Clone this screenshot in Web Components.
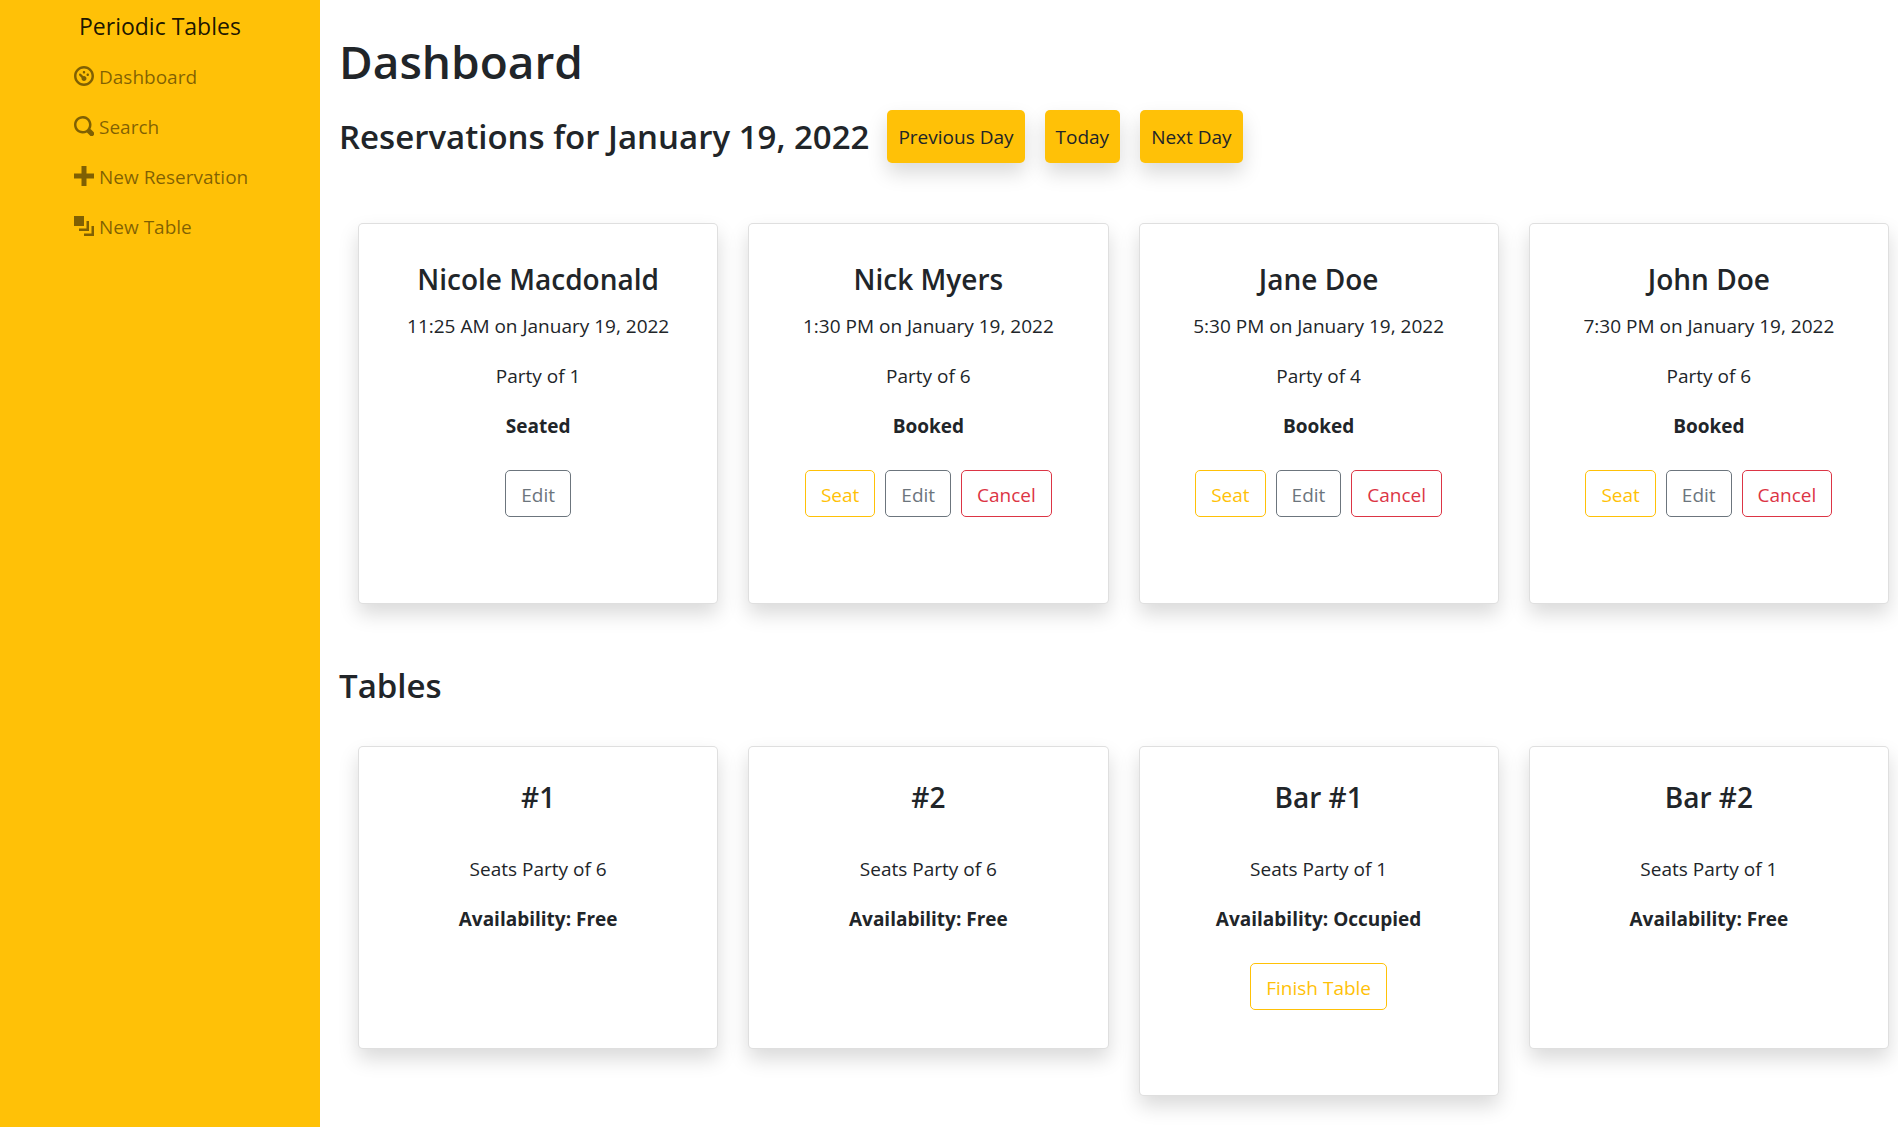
<!DOCTYPE html>
<html lang="en">
<head>
<meta charset="utf-8">
<title>Periodic Tables</title>
<style>
  body {
    margin: 0;
    background: #fff;
    color: #212529;
    font: 400 19px/30px "Open Sans", "Noto Sans", sans-serif;
  }
</style>
</head>
<body>
<app-shell>
  <side-nav slot="nav" brand="Periodic Tables">
    <nav-item icon="dashboard">Dashboard</nav-item>
    <nav-item icon="search">Search</nav-item>
    <nav-item icon="plus">New Reservation</nav-item>
    <nav-item icon="layers">New Table</nav-item>
  </side-nav>
  <day-header heading="Dashboard" subheading="Reservations for January 19, 2022">
    <app-button kind="solid">Previous Day</app-button>
    <app-button kind="solid">Today</app-button>
    <app-button kind="solid">Next Day</app-button>
  </day-header>
  <card-grid>
    <reservation-card name="Nicole Macdonald" time="11:25 AM on January 19, 2022" party="1" status="Seated">
      <app-button kind="secondary">Edit</app-button>
    </reservation-card>
    <reservation-card name="Nick Myers" time="1:30 PM on January 19, 2022" party="6" status="Booked">
      <app-button kind="warning">Seat</app-button>
      <app-button kind="secondary">Edit</app-button>
      <app-button kind="danger">Cancel</app-button>
    </reservation-card>
    <reservation-card name="Jane Doe" time="5:30 PM on January 19, 2022" party="4" status="Booked">
      <app-button kind="warning">Seat</app-button>
      <app-button kind="secondary">Edit</app-button>
      <app-button kind="danger">Cancel</app-button>
    </reservation-card>
    <reservation-card name="John Doe" time="7:30 PM on January 19, 2022" party="6" status="Booked">
      <app-button kind="warning">Seat</app-button>
      <app-button kind="secondary">Edit</app-button>
      <app-button kind="danger">Cancel</app-button>
    </reservation-card>
  </card-grid>
  <section-title>Tables</section-title>
  <card-grid>
    <table-card name="#1" seats="6" availability="Free"></table-card>
    <table-card name="#2" seats="6" availability="Free"></table-card>
    <table-card name="Bar #1" seats="1" availability="Occupied">
      <app-button kind="warning">Finish Table</app-button>
    </table-card>
    <table-card name="Bar #2" seats="1" availability="Free"></table-card>
  </card-grid>
</app-shell>

<script>
const SHADOW = '0 10px 20px rgba(0, 0, 0, .15)';

const ICONS = {
  dashboard: 'M4 0c-2.2 0-4 1.8-4 4s1.8 4 4 4 4-1.8 4-4-1.8-4-4-4zm0 1c1.66 0 3 1.34 3 3s-1.34 3-3 3-3-1.34-3-3 1.34-3 3-3zm0 1c-.28 0-.5.22-.5.5s.22.5.5.5.5-.22.5-.5-.22-.5-.5-.5zm-1.66 1a.5.5 0 0 0-.19.84l.91.91c-.02.08-.06.16-.06.25 0 .55.45 1 1 1s1-.45 1-1-.45-1-1-1c-.09 0-.17.04-.25.06l-.91-.91a.5.5 0 0 0-.44-.16.5.5 0 0 0-.06 0zm3.16 0c-.28 0-.5.22-.5.5s.22.5.5.5.5-.22.5-.5-.22-.5-.5-.5z',
  search: 'M3.5 0c-1.93 0-3.5 1.57-3.5 3.5s1.57 3.5 3.5 3.5c.59 0 1.17-.14 1.66-.41a1 1 0 0 0 .13.13l1 1a1.02 1.02 0 1 0 1.44-1.44l-1-1a1 1 0 0 0-.16-.13c.27-.49.44-1.06.44-1.66 0-1.93-1.55-3.5-3.5-3.5zm0 1c1.39 0 2.5 1.11 2.5 2.5 0 .66-.24 1.27-.66 1.72-.01.01-.02.02-.03.03a1 1 0 0 0-.13.13c-.44.4-1.04.63-1.69.63-1.39 0-2.5-1.11-2.5-2.5s1.11-2.5 2.5-2.5z',
  plus: 'M3 0v3h-3v2h3v3h2v-3h3v-2h-3v-3h-2z',
  layers: 'M0 0v4h4v-4h-4zm5 2v3h-3v1h4v-4h-1zm2 2v3h-3v1h4v-4h-1z'
};

/* Base class: renders css() and html() into an open shadow root. */
class View extends HTMLElement {
  connectedCallback() {
    if (this.shadowRoot) return;
    this.attachShadow({ mode: 'open' }).innerHTML =
      `<style>*{box-sizing:border-box}${this.css()}</style>${this.html()}`;
  }
  attr(name) { return this.getAttribute(name) || ''; }
}

customElements.define('app-shell', class extends View {
  css() { return `
    :host { display: flex; min-height: 100vh; }
    aside { flex: none; width: 320px; background: #ffc107; }
    main { flex: 1; min-width: 0; padding: 31px 9px 30px 19px; }
  `; }
  html() { return `<aside><slot name="nav"></slot></aside><main><slot></slot></main>`; }
});

customElements.define('side-nav', class extends View {
  css() { return `
    :host { display: block; }
    .brand { display: flex; align-items: center; height: 52px; padding-left: 79px;
      font-size: 23px; color: rgba(0, 0, 0, .9); text-decoration: none; }
    nav { display: flex; flex-direction: column; }
  `; }
  html() { return `<a class="brand" href="#">${this.attr('brand')}</a><nav><slot></slot></nav>`; }
});

customElements.define('nav-item', class extends View {
  css() { return `
    :host { display: block; }
    a { display: flex; align-items: center; gap: 5px; padding: 10px 16px 10px 74px;
      color: rgba(0, 0, 0, .5); text-decoration: none; }
    svg { flex: none; width: 20px; height: 20px; margin-bottom: 2px; fill: currentColor; }
  `; }
  html() { return `<a href="#"><svg viewBox="0 0 8 8" aria-hidden="true"><path d="${ICONS[this.attr('icon')]}"/></svg><span><slot></slot></span></a>`; }
});

customElements.define('day-header', class extends View {
  css() { return `
    :host { display: block; margin-bottom: 60px; }
    h1 { margin: 0 0 19px; font-size: 46px; line-height: 60px; font-weight: 600; }
    .row { display: flex; flex-wrap: wrap; align-items: center; gap: 18px; }
    h2 { margin: 0; font-size: 33px; line-height: 42px; font-weight: 600; }
    .buttons { display: flex; gap: 20px; }
  `; }
  html() { return `<h1>${this.attr('heading')}</h1>
    <div class="row"><h2>${this.attr('subheading')}</h2><div class="buttons"><slot></slot></div></div>`; }
});

customElements.define('section-title', class extends View {
  css() { return `
    :host { display: block; margin: 61px 0 39px; }
    h2 { margin: 0; font-size: 33px; line-height: 42px; font-weight: 600; }
  `; }
  html() { return `<h2><slot></slot></h2>`; }
});

customElements.define('card-grid', class extends View {
  css() { return `
    :host { display: grid; grid-template-columns: repeat(4, minmax(0, 1fr)); gap: 30px;
      align-items: start; padding-left: 19px; }
  `; }
  html() { return `<slot></slot>`; }
});

customElements.define('app-button', class extends View {
  css() { return `
    :host { display: block; }
    button { display: block; margin: 0; padding: 9px 15px 6px; border: 1px solid currentColor;
      border-radius: 5px; background: transparent; font: inherit; white-space: nowrap; cursor: pointer; }
    .warning { color: #ffc107; }
    .secondary { color: #6c757d; }
    .danger { color: #dc3545; }
    .solid { padding: 12px 11px 11px; border: 0; background: #ffc107; color: #212529; box-shadow: ${SHADOW}; }
  `; }
  html() { return `<button type="button" class="${this.attr('kind')}"><slot></slot></button>`; }
});

const CARD_CSS = `
  :host { display: block; }
  article { border: 1px solid rgba(0, 0, 0, .125); border-radius: 5px; background: #fff;
    box-shadow: ${SHADOW}; text-align: center; }
  h3 { margin: 0; font-size: 28px; line-height: 36px; font-weight: 600; }
  p { margin: 0 0 20px; }
  .state { margin-bottom: 29px; font-weight: 700; }
  .actions { display: flex; justify-content: center; gap: 10px; }
`;

customElements.define('reservation-card', class extends View {
  css() { return CARD_CSS + `article { padding: 37px 20px 86px; } h3 { margin-bottom: 14px; }`; }
  html() { return `<article><h3>${this.attr('name')}</h3><p>${this.attr('time')}</p>
    <p>Party of ${this.attr('party')}</p><p class="state">${this.attr('status')}</p>
    <div class="actions"><slot></slot></div></article>`; }
});

customElements.define('table-card', class extends View {
  css() { return CARD_CSS + `article { padding: 32px 20px 85px; } h3 { margin-bottom: 39px; }`; }
  html() { return `<article><h3>${this.attr('name')}</h3><p>Seats Party of ${this.attr('seats')}</p>
    <p class="state">Availability: ${this.attr('availability')}</p>
    <div class="actions"><slot></slot></div></article>`; }
});
</script>
</body>
</html>
